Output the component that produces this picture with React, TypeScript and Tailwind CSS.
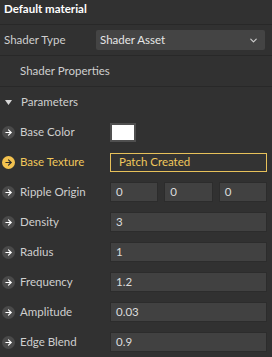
import { ArrowRight, ChevronDown } from 'lucide-react';

const font = { fontFamily: 'Lato, "Noto Sans", sans-serif' };

function Dot({ active = false }: { active?: boolean }) {
    return (
        <span
            className={`flex h-[13px] w-[13px] shrink-0 items-center justify-center rounded-full ${
                active ? 'bg-[#f3c24f] text-[#2b2b2b]' : 'bg-[#4a4a4a] text-white'
            }`}
        >
            <ArrowRight size={9} strokeWidth={3} />
        </span>
    );
}

function Field({ value }: { value: string }) {
    return (
        <div className="flex h-[20px] flex-1 items-center border border-[#2c2c2c] bg-[#414141] px-[5px] text-[11.5px] text-[#dcdcdc]">
            {value}
        </div>
    );
}

function Row({ label, children, active = false }: { label: string; children: React.ReactNode; active?: boolean }) {
    return (
        <div className="flex h-[30px] items-center pr-[5px]">
            <div className="flex w-[110px] items-center gap-[5px] pl-[2px]">
                <Dot active={active} />
                <span className={`text-[11.5px] ${active ? 'text-[#f0c75c]' : 'text-[#cfcfcf]'}`}>{label}</span>
            </div>
            <div className="flex flex-1 gap-[6px]">{children}</div>
        </div>
    );
}

export default function App(): JSX.Element {
    const params: [string, string][] = [
        ['Density', '3'],
        ['Radius', '1'],
        ['Frequency', '1.2'],
        ['Amplitude', '0.03'],
        ['Edge Blend', '0.9'],
    ];

    return (
        <div style={font} className="h-[357px] w-[272px] overflow-hidden bg-[#313131] leading-[16px]">
            <header className="h-[25px] border-b border-[#282828] pl-[4px] pt-[1px] text-[11.5px] font-bold text-white">
                Default material
            </header>
            <div className="flex h-[31px] items-center border-b border-[#282828] pl-[4px] pr-[7px]">
                <span className="w-[92px] text-[11.5px] text-[#cfcfcf]">Shader Type</span>
                <div className="flex h-[20px] flex-1 items-center justify-between rounded-[2px] bg-[#444444] pl-[4px] pr-[6px] text-[11.5px] text-[#e6e6e6]">
                    Shader Asset
                    <ChevronDown size={11} strokeWidth={2.5} className="text-[#cfcfcf]" />
                </div>
            </div>
            <div className="flex h-[31px] items-center border-b border-[#282828] pl-[20px] text-[11.5px] text-[#cfcfcf]">
                Shader Properties
            </div>
            <div className="flex h-[30px] items-center gap-[9px] pl-[5px] text-[11.5px] text-[#cfcfcf]">
                <svg width="7" height="5" viewBox="0 0 7 5">
                    <path d="M0 0 H7 L3.5 5 Z" fill="#d6d6d6" />
                </svg>
                Parameters
            </div>
            <Row label="Base Color">
                <div className="h-[19px] w-[26px] border-2 border-[#505050] bg-white" />
            </Row>
            <Row label="Base Texture" active>
                <div className="flex h-[19px] flex-1 items-center border border-[#e7c15a] bg-[#333333] px-[8px] text-[11.5px] text-[#f0c75c]">
                    Patch Created
                </div>
            </Row>
            <Row label="Ripple Origin">
                <Field value="0" />
                <Field value="0" />
                <Field value="0" />
            </Row>
            {params.map(([label, value]) => (
                <Row key={label} label={label}>
                    <Field value={value} />
                </Row>
            ))}
        </div>
    );
}
